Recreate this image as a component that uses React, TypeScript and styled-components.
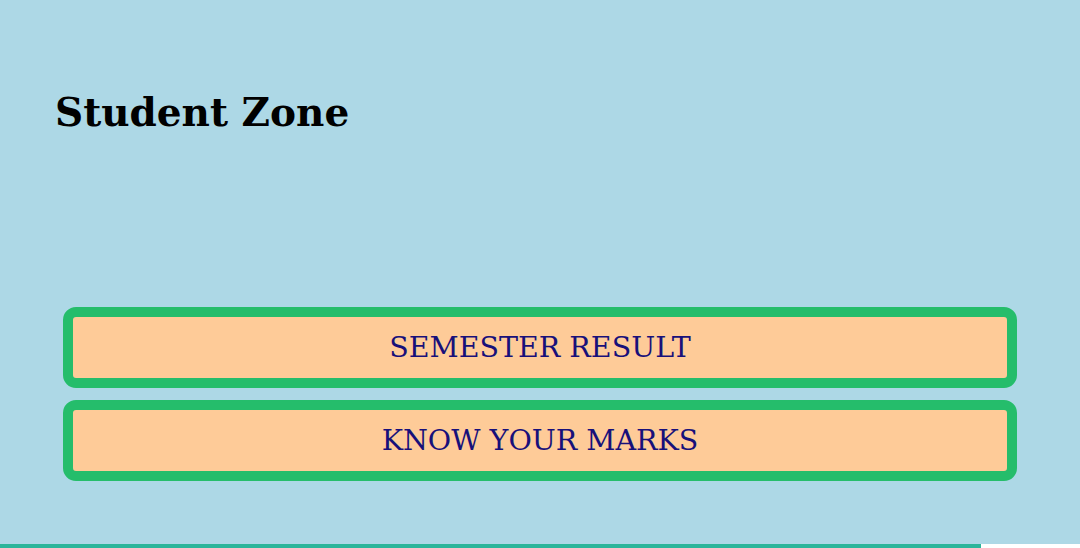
import styled, { createGlobalStyle } from 'styled-components';

const GlobalStyle = createGlobalStyle`
  html, body {
    margin: 0;
    padding: 0;
    background: #add8e6;
  }
`;

const Screen = styled.div`
  width: 1080px;
  height: 548px;
  background: #add8e6;
  display: flex;
  flex-direction: column;
  position: relative;
  overflow: hidden;
`;

const Title = styled.h1`
  margin: 0;
  padding: 89px 0 0 55px;
  font-family: 'DejaVu Serif', 'Liberation Serif', serif;
  font-weight: 700;
  font-size: 39px;
  line-height: 47px;
  color: #000;
`;

const ButtonList = styled.div`
  display: flex;
  flex-direction: column;
  gap: 12px;
  margin: 171px 63px 0 63px;
`;

const MenuButton = styled.button`
  height: 81px;
  box-sizing: border-box;
  border: 10px solid #25bd6b;
  border-radius: 13px;
  background: #fecb98;
  color: #18107a;
  font-family: 'DejaVu Serif', 'Liberation Serif', serif;
  font-size: 28.5px;
  display: flex;
  align-items: center;
  justify-content: center;
  padding: 0;
  cursor: pointer;
`;

const BottomBar = styled.div`
  margin-top: auto;
  display: flex;
  height: 4px;
`;

const Progress = styled.div`
  width: 981px;
  background: #2bb59a;
`;

const Rest = styled.div`
  flex: 1;
  background: #fff;
`;

const menu = ['SEMESTER RESULT', 'KNOW YOUR MARKS'];

const App = () => {
  return (
    <>
      <GlobalStyle />
      <Screen>
        <Title>Student Zone</Title>
        <ButtonList>
          {menu.map((label) => (
            <MenuButton key={label}>{label}</MenuButton>
          ))}
        </ButtonList>
        <BottomBar>
          <Progress />
          <Rest />
        </BottomBar>
      </Screen>
    </>
  );
};

export default App;
